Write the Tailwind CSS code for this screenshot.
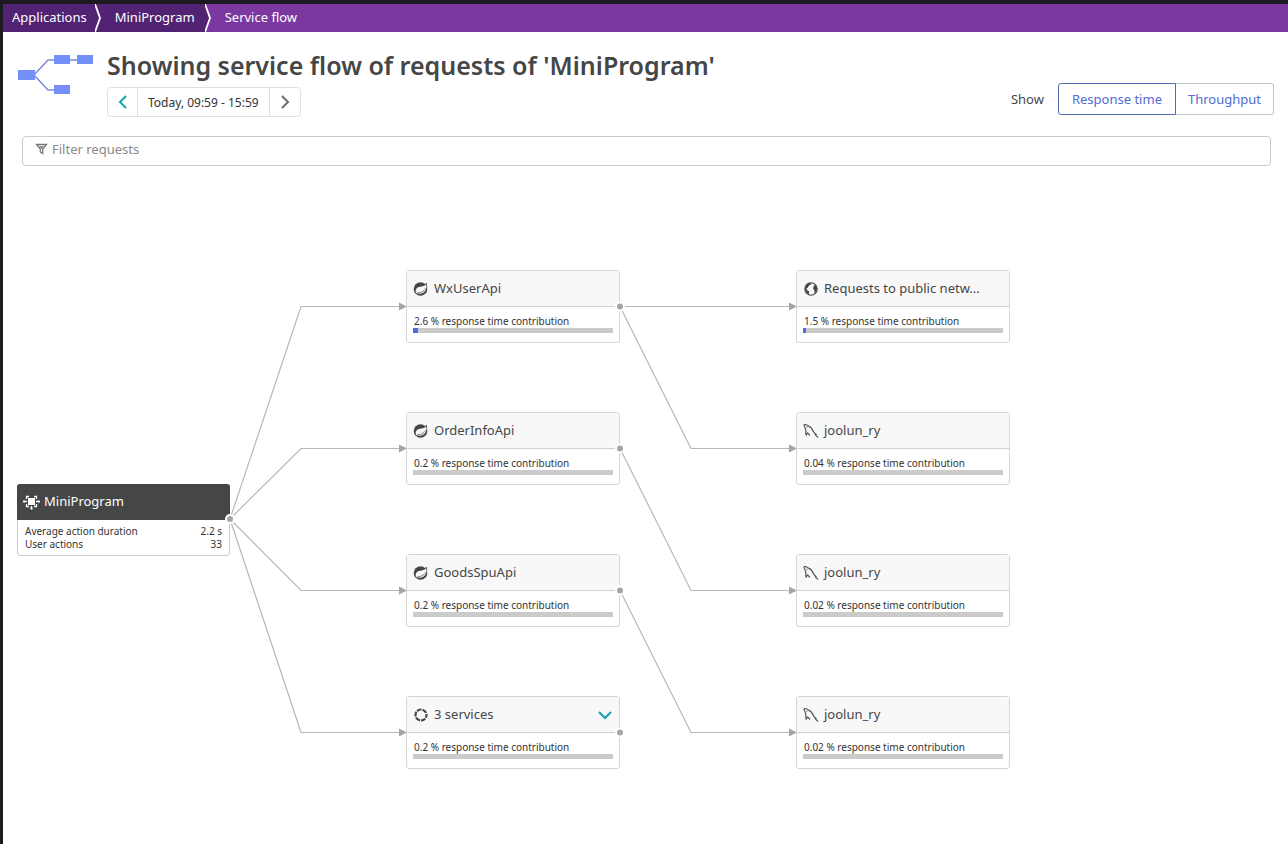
<!DOCTYPE html>
<html lang="en">
<head>
<meta charset="utf-8">
<meta name="viewport" content="width=device-width, initial-scale=1">
<title>Service flow</title>
<script src="https://cdn.jsdelivr.net/npm/@tailwindcss/browser@4"></script>
</head>
<body class="min-h-screen flex flex-col bg-white border-t-4 border-l-3 border-[#1b1a1e] text-[#454646] font-['Noto_Sans','Open_Sans',sans-serif]">

<svg class="hidden" aria-hidden="true">
  <symbol id="spring" viewBox="0 0 16 16">
    <circle cx="7.500" cy="8" r="6.800" fill="#454646"/>
    <path fill="#454646" d="M12 3L13.800 1.800L14.300 7z"/>
    <path fill="#f8f8f8" d="M13.100 3.300C11.600 5.200 9.500 5.400 7.200 5.700C4 6.100 2.300 8 2.800 11.200C3.200 12.200 3.700 12.300 4.700 12.600C8.500 13 11.800 11.600 13 8.400C13.600 6.600 13.500 4.800 13.100 3.300z"/>
    <path fill="none" stroke="#454646" stroke-width=".7" d="M4 12C6.800 11.600 10.800 11 12.600 7.300"/>
  </symbol>
  <symbol id="mysql" viewBox="0 0 16 16">
    <path fill="none" stroke="#555656" stroke-width="1.200" stroke-linejoin="round" stroke-linecap="round" d="M3.200 12.200C2.300 10 3.100 8.300 2.700 6.500C2.200 5 1.200 3.500 1 1.800C2.600 1.100 4.600 2.200 5.600 3.100C8 4 9.600 6.600 10.600 8.700C11.200 10 12 10.700 13.200 11.400L12.300 11.900L14.600 14M3.200 12.200L4.600 9.800L6.600 12"/>
    <circle cx="4" cy="4.200" r=".6" fill="#555656"/>
  </symbol>
</svg>

<nav aria-label="Breadcrumb" class="h-7 flex bg-[#7c38a1] text-white text-[13px] leading-[26px]">
  <a href="#" class="bg-[#522273] pl-[9px] pr-2">Applications</a>
  <svg class="w-[10px] h-7 bg-[#522273]" viewBox="0 0 10 28" aria-hidden="true"><path d="M0 0L5 14L0 28" fill="none" stroke="#fff" stroke-width="1.800"/></svg>
  <a href="#" class="bg-[#522273] px-[10px]">MiniProgram</a>
  <svg class="w-[10px] h-7" viewBox="0 0 10 28" aria-hidden="true"><path d="M0 0L5 14L0 28z" fill="#522273"/><path d="M0 0L5 14L0 28" fill="none" stroke="#fff" stroke-width="1.800"/></svg>
  <a href="#" aria-current="page" class="px-[10px]">Service flow</a>
</nav>

<header class="flex pl-[15px] pr-[14px] pt-[15px]">
  <svg class="w-[76px] h-12 mt-[5px] mr-[13px] shrink-0" viewBox="0 0 76 48" aria-hidden="true">
    <path d="M16 23L30 8H70M16 23L30 38H40" fill="none" stroke="#7b8bdc" stroke-width="1.500"/>
    <g fill="#758ff8"><rect y="18" width="17" height="10"/><rect x="36" y="3" width="16" height="9"/><rect x="59" y="3" width="16" height="9"/><rect x="36" y="33" width="16" height="9"/></g>
  </svg>
  <div class="grow">
    <h1 class="text-[25px] leading-9 font-semibold">Showing service flow of requests of 'MiniProgram'</h1>
    <div class="mt-1 inline-flex h-[30px] border border-[#e0e0e0] rounded-sm divide-x divide-[#e0e0e0] text-xs text-[#333]">
      <button type="button" aria-label="Previous timeframe" class="w-[30px] grid place-items-center"><svg class="w-3 h-4" viewBox="0 0 12 16" fill="none" stroke="#14a8a8" stroke-width="2"><path d="M9 2L3 8L9 14"/></svg></button>
      <button type="button" class="px-[10px] pt-[2px]">Today, 09:59 - 15:59</button>
      <button type="button" aria-label="Next timeframe" class="w-[30px] grid place-items-center"><svg class="w-3 h-4" viewBox="0 0 12 16" fill="none" stroke="#6d6d6d" stroke-width="2"><path d="M3 2L9 8L3 14"/></svg></button>
    </div>
  </div>
  <div class="mt-9 h-8 flex items-center text-[13px]">
    <span class="mr-[14px] pt-[2px]">Show</span>
    <button type="button" aria-pressed="true" class="h-8 px-[13px] pt-[2px] border border-[#526cb0] rounded-l-[3px] text-[#526cd0]">Response time</button>
    <button type="button" aria-pressed="false" class="h-8 px-3 pt-[2px] border border-l-0 border-[#c4c6cc] rounded-r-[3px] text-[#526cd0]">Throughput</button>
  </div>
</header>

<label class="mt-[19px] ml-[19px] mr-[17px] h-[30px] flex items-center gap-1 pl-3 border border-[#cbcbcb] rounded-sm">
  <svg class="w-[13px] h-3 -mt-1" viewBox="0 0 13 12" aria-hidden="true"><path d="M1.500 1.500H11.500L7.700 6V10.500L5.300 9V6z" fill="none" stroke="#777" stroke-width="1.300"/><path d="M2.500 3H10.500L7.500 6H5.500z" fill="#999"/></svg>
  <input type="text" aria-label="Filter requests" placeholder="Filter requests" class="grow text-[13px] leading-5 pb-1 outline-none placeholder:text-[#898989]">
</label>

<main class="relative grow min-h-[620px]">
  <svg class="absolute left-0 top-0 w-[1010px] h-[620px]" viewBox="0 0 1010 620" aria-hidden="true">
    <g fill="none" stroke="#b7b7b7" stroke-width="1.200">
      <path d="M227 353L298 140.500H398M227 353L298 282.500H398M227 353L298 424.500H398M227 353L298 566.500H398"/>
      <path d="M617 140.500H788M617 140.500L688 282.500H788M617 282.500L688 424.500H788M617 424.500L688 566.500H788"/>
    </g>
    <g fill="#a5a5a5">
      <path d="M396 136.500v8l8-4zM396 278.500v8l8-4zM396 420.500v8l8-4zM396 562.500v8l8-4z"/>
      <path d="M786 136.500v8l8-4zM786 278.500v8l8-4zM786 420.500v8l8-4zM786 562.500v8l8-4z"/>
    </g>
  </svg>

  <section class="absolute left-[14px] top-[318px] w-[213px] border border-[#ccc] rounded-[3px] bg-white">
    <h2 class="-mx-px -mt-px h-9 flex items-center gap-1 px-[6px] rounded-t-[3px] bg-[#454646] text-white text-[13px]">
      <svg class="w-[17px] h-4" viewBox="0 0 17 16" aria-hidden="true"><rect x="5" y="4" width="7" height="7" fill="#fff"/><path d="M6 2.500H3.500V5M11 2.500H13.500V5M3.500 10V12.500H6M13.500 10V12.500H11M4 7.500H1M13 7.500H16M8.500 12V15" fill="none" stroke="#fff" stroke-width="1.300"/><path d="M0 6.500h2v2H0zM15 6.500h2v2h-2zM7.500 13.500h2v2h-2zM3 4h1v1H3z" fill="#fff"/></svg>
      MiniProgram</h2>
    <dl class="grid grid-cols-[1fr_auto] px-[7px] pt-[5px] pb-1 text-[10px] leading-[13px] text-[#333]">
      <dt>Average action duration</dt><dd>2.2 s</dd>
      <dt>User actions</dt><dd class="text-right">33</dd>
    </dl>
  </section>

  <section class="absolute left-[403px] top-[104px] w-[214px] h-[73px] border border-[#d6d6d6] rounded-[3px] bg-white">
    <h2 class="h-9 flex items-center gap-[5px] px-[6px] border-b border-[#d0d0d0] bg-[#f8f8f8] text-[13px]"><svg class="w-4 h-4" aria-hidden="true"><use href="#spring"/></svg>WxUserApi</h2>
    <p class="px-[7px] pt-[7px] text-[10px] leading-[14px] text-[#333]">2.6 % response time contribution</p>
    <div class="mx-[6px] h-[5px] bg-[#cbcbcb]"><div class="h-full bg-[#526be0]" style="width:2.6%"></div></div>
  </section>
  <section class="absolute left-[403px] top-[246px] w-[214px] h-[73px] border border-[#d6d6d6] rounded-[3px] bg-white">
    <h2 class="h-9 flex items-center gap-[5px] px-[6px] border-b border-[#d0d0d0] bg-[#f8f8f8] text-[13px]"><svg class="w-4 h-4" aria-hidden="true"><use href="#spring"/></svg>OrderInfoApi</h2>
    <p class="px-[7px] pt-[7px] text-[10px] leading-[14px] text-[#333]">0.2 % response time contribution</p>
    <div class="mx-[6px] h-[5px] bg-[#cbcbcb]"></div>
  </section>
  <section class="absolute left-[403px] top-[388px] w-[214px] h-[73px] border border-[#d6d6d6] rounded-[3px] bg-white">
    <h2 class="h-9 flex items-center gap-[5px] px-[6px] border-b border-[#d0d0d0] bg-[#f8f8f8] text-[13px]"><svg class="w-4 h-4" aria-hidden="true"><use href="#spring"/></svg>GoodsSpuApi</h2>
    <p class="px-[7px] pt-[7px] text-[10px] leading-[14px] text-[#333]">0.2 % response time contribution</p>
    <div class="mx-[6px] h-[5px] bg-[#cbcbcb]"></div>
  </section>
  <section class="absolute left-[403px] top-[530px] w-[214px] h-[73px] border border-[#d6d6d6] rounded-[3px] bg-white">
    <h2 class="h-9 flex items-center gap-[5px] px-[6px] border-b border-[#d0d0d0] bg-[#f8f8f8] text-[13px]"><svg class="w-4 h-4" viewBox="0 0 16 16" aria-hidden="true"><circle cx="8" cy="8" r="5.500" fill="none" stroke="#454646" stroke-width="2.200" stroke-dasharray="4.760 1" stroke-dashoffset="2"/></svg>3 services
      <button type="button" aria-label="Expand services" class="ml-auto"><svg class="w-4 h-4" viewBox="0 0 16 16" fill="none" stroke="#14a0b0" stroke-width="2"><path d="M2 5L8 11L14 5"/></svg></button></h2>
    <p class="px-[7px] pt-[7px] text-[10px] leading-[14px] text-[#333]">0.2 % response time contribution</p>
    <div class="mx-[6px] h-[5px] bg-[#cbcbcb]"></div>
  </section>

  <section class="absolute left-[793px] top-[104px] w-[214px] h-[73px] border border-[#d6d6d6] rounded-[3px] bg-white">
    <h2 class="h-9 flex items-center gap-[5px] px-[6px] border-b border-[#d0d0d0] bg-[#f8f8f8] text-[13px]"><svg class="w-4 h-4" viewBox="0 0 16 16" aria-hidden="true"><circle cx="8" cy="8" r="6.200" fill="none" stroke="#454646" stroke-width="1.100"/><path fill="#454646" d="M2 8L2 6L4 3L7 1.800L8.500 2.500L7 4L5.500 5L5 6.500L3.500 7.500L4 9L6.200 10.500L6 12L5.500 13.500L3.500 11.500zM10.500 5.500L11.500 4.200L12.800 4L14.200 7.500L13 11L11.500 12.500L11.500 9.500L10.200 8z"/></svg>Requests to public netw...</h2>
    <p class="px-[7px] pt-[7px] text-[10px] leading-[14px] text-[#333]">1.5 % response time contribution</p>
    <div class="mx-[6px] h-[5px] bg-[#cbcbcb]"><div class="h-full bg-[#526be0]" style="width:1.5%"></div></div>
  </section>
  <section class="absolute left-[793px] top-[246px] w-[214px] h-[73px] border border-[#d6d6d6] rounded-[3px] bg-white">
    <h2 class="h-9 flex items-center gap-[5px] px-[6px] border-b border-[#d0d0d0] bg-[#f8f8f8] text-[13px]"><svg class="w-4 h-4" aria-hidden="true"><use href="#mysql"/></svg>joolun_ry</h2>
    <p class="px-[7px] pt-[7px] text-[10px] leading-[14px] text-[#333]">0.04 % response time contribution</p>
    <div class="mx-[6px] h-[5px] bg-[#cbcbcb]"></div>
  </section>
  <section class="absolute left-[793px] top-[388px] w-[214px] h-[73px] border border-[#d6d6d6] rounded-[3px] bg-white">
    <h2 class="h-9 flex items-center gap-[5px] px-[6px] border-b border-[#d0d0d0] bg-[#f8f8f8] text-[13px]"><svg class="w-4 h-4" aria-hidden="true"><use href="#mysql"/></svg>joolun_ry</h2>
    <p class="px-[7px] pt-[7px] text-[10px] leading-[14px] text-[#333]">0.02 % response time contribution</p>
    <div class="mx-[6px] h-[5px] bg-[#cbcbcb]"></div>
  </section>
  <section class="absolute left-[793px] top-[530px] w-[214px] h-[73px] border border-[#d6d6d6] rounded-[3px] bg-white">
    <h2 class="h-9 flex items-center gap-[5px] px-[6px] border-b border-[#d0d0d0] bg-[#f8f8f8] text-[13px]"><svg class="w-4 h-4" aria-hidden="true"><use href="#mysql"/></svg>joolun_ry</h2>
    <p class="px-[7px] pt-[7px] text-[10px] leading-[14px] text-[#333]">0.02 % response time contribution</p>
    <div class="mx-[6px] h-[5px] bg-[#cbcbcb]"></div>
  </section>

  <svg class="absolute left-0 top-0 w-[1010px] h-[620px] pointer-events-none" viewBox="0 0 1010 620" aria-hidden="true">
    <g fill="#a5a5a5" stroke="#fff" stroke-width="2"><circle cx="227" cy="353" r="4"/><circle cx="617" cy="140.500" r="4"/><circle cx="617" cy="282.500" r="4"/><circle cx="617" cy="424.500" r="4"/><circle cx="617" cy="566.500" r="4"/></g>
  </svg>
</main>
</body>
</html>
